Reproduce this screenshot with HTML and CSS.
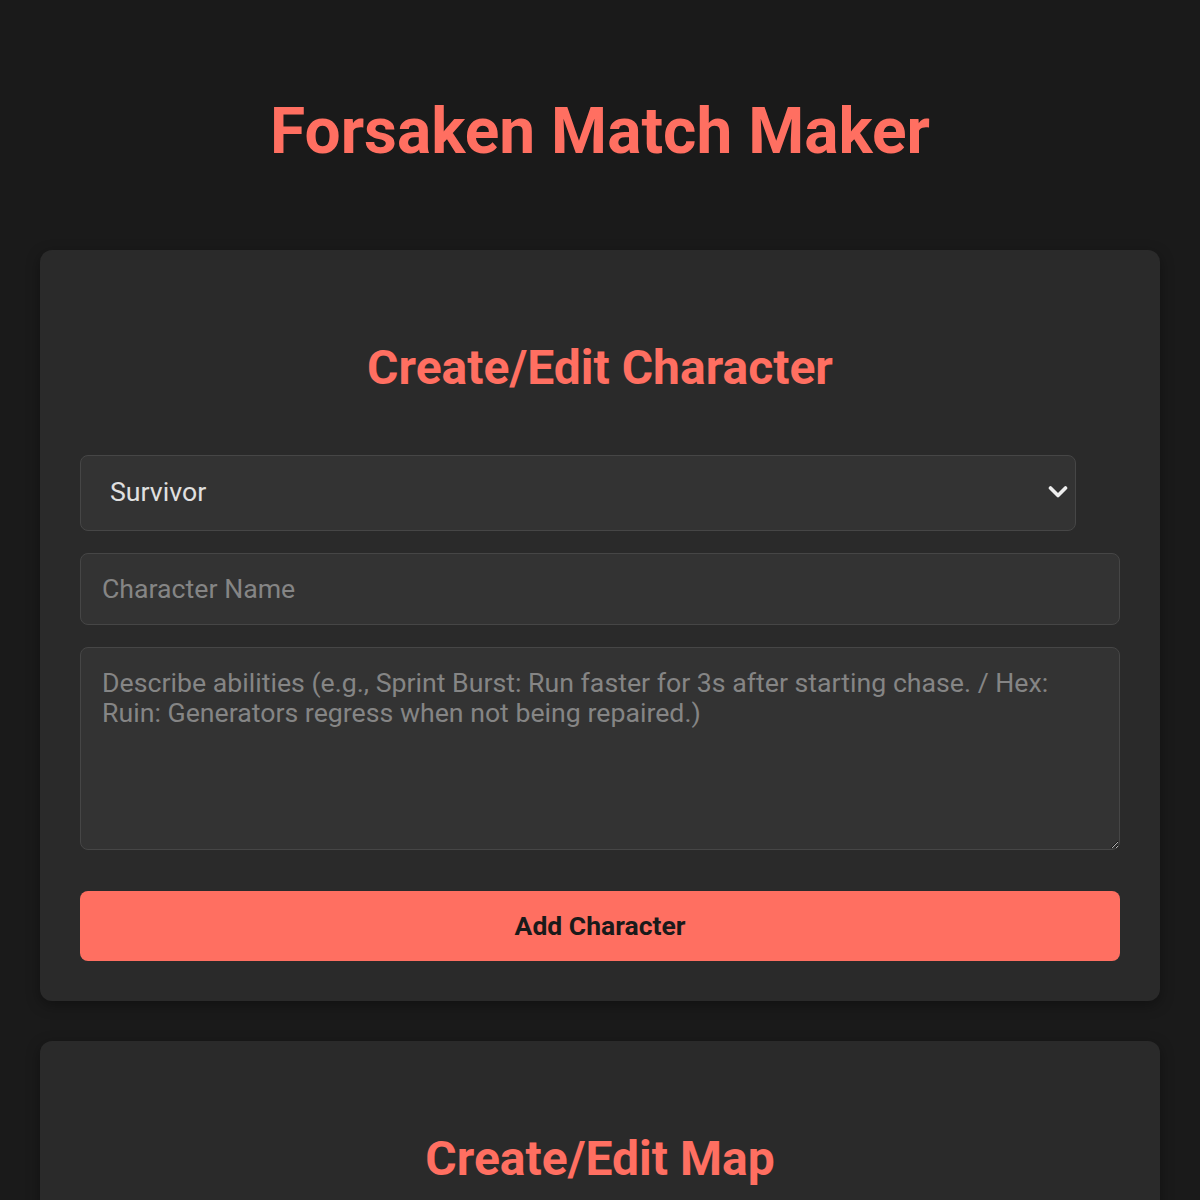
FILE: index.html
```html
<!DOCTYPE html>
<html lang="en">
<head>
<meta charset="UTF-8">
<title>Forsaken Match Maker</title>
<link rel="stylesheet" href="styles.css">
</head>
<body>
<div class="container">
  <h1 class="title">Forsaken Match Maker</h1>

  <section class="card">
    <h2 class="card-title">Create/Edit Character</h2>
    <form class="form">
      <div class="select-wrap">
        <select class="field select">
          <option>Survivor</option>
          <option>Killer</option>
        </select>
        <svg class="chevron" width="20" height="14" viewBox="0 0 20 14" aria-hidden="true">
          <path d="M2.5 3 L10 10.5 L17.5 3" fill="none" stroke="#eeeeee" stroke-width="3.6" stroke-linecap="round" stroke-linejoin="round"/>
        </svg>
      </div>
      <input class="field input" type="text" placeholder="Character Name">
      <textarea class="field textarea" placeholder="Describe abilities (e.g., Sprint Burst: Run faster for 3s after starting chase. / Hex: Ruin: Generators regress when not being repaired.)"></textarea>
      <button class="btn" type="button">Add Character</button>
    </form>
  </section>

  <section class="card">
    <h2 class="card-title">Create/Edit Map</h2>
    <form class="form">
      <input class="field input" type="text" placeholder="Map Name">
    </form>
  </section>
</div>
</body>
</html>
```
FILE: styles.css
```css
* { box-sizing: border-box; }

html, body {
  margin: 0;
  padding: 0;
  background: #1a1a1a;
  color: #e0e0e0;
  font-family: Roboto, "Noto Sans", Arial, sans-serif;
}

.container {
  padding: 94px 40px 40px;
  display: flex;
  flex-direction: column;
  gap: 40px;
}

.title {
  margin: 0 0 41px;
  text-align: center;
  color: #ff6f61;
  font-size: 64px;
  font-weight: 700;
  line-height: 75px;
}

.card {
  background: #2a2a2a;
  border-radius: 12px;
  padding: 90px 40px 40px;
  box-shadow: 0 4px 14px rgba(0, 0, 0, 0.35);
}

.card-title {
  margin: 0 0 59px;
  text-align: center;
  color: #ff6f61;
  font-size: 48px;
  font-weight: 700;
  line-height: 56px;
}

.form {
  display: flex;
  flex-direction: column;
  align-items: stretch;
}

.field {
  display: block;
  background: #333333;
  border: 1px solid #464646;
  border-radius: 8px;
  color: #e0e0e0;
  font-family: Roboto, "Noto Sans", Arial, sans-serif;
  font-size: 26.7px;
  margin: 0 0 22px;
}

.field::placeholder {
  color: #858585;
}

.select-wrap {
  position: relative;
  width: calc(100% - 44px);
  margin: 0 0 22px;
}

.select {
  width: 100%;
  height: 76px;
  padding: 0 40px 2px 29px;
  margin: 0;
  appearance: none;
  -webkit-appearance: none;
}

.chevron {
  position: absolute;
  right: 8px;
  top: 30px;
  pointer-events: none;
}

.input {
  width: 100%;
  height: 72px;
  padding: 0 21px 1px;
}

.textarea {
  width: 100%;
  height: 203px;
  padding: 20px 21px;
  line-height: 30px;
  resize: vertical;
  margin-bottom: 41px;
  color-scheme: dark;
}

.btn {
  height: 70px;
  border: none;
  border-radius: 8px;
  background: #ff6f61;
  color: #1a1a1a;
  font-family: Roboto, "Noto Sans", Arial, sans-serif;
  font-size: 26.5px;
  font-weight: 700;
  padding: 0 0 2px;
  cursor: pointer;
}
```
